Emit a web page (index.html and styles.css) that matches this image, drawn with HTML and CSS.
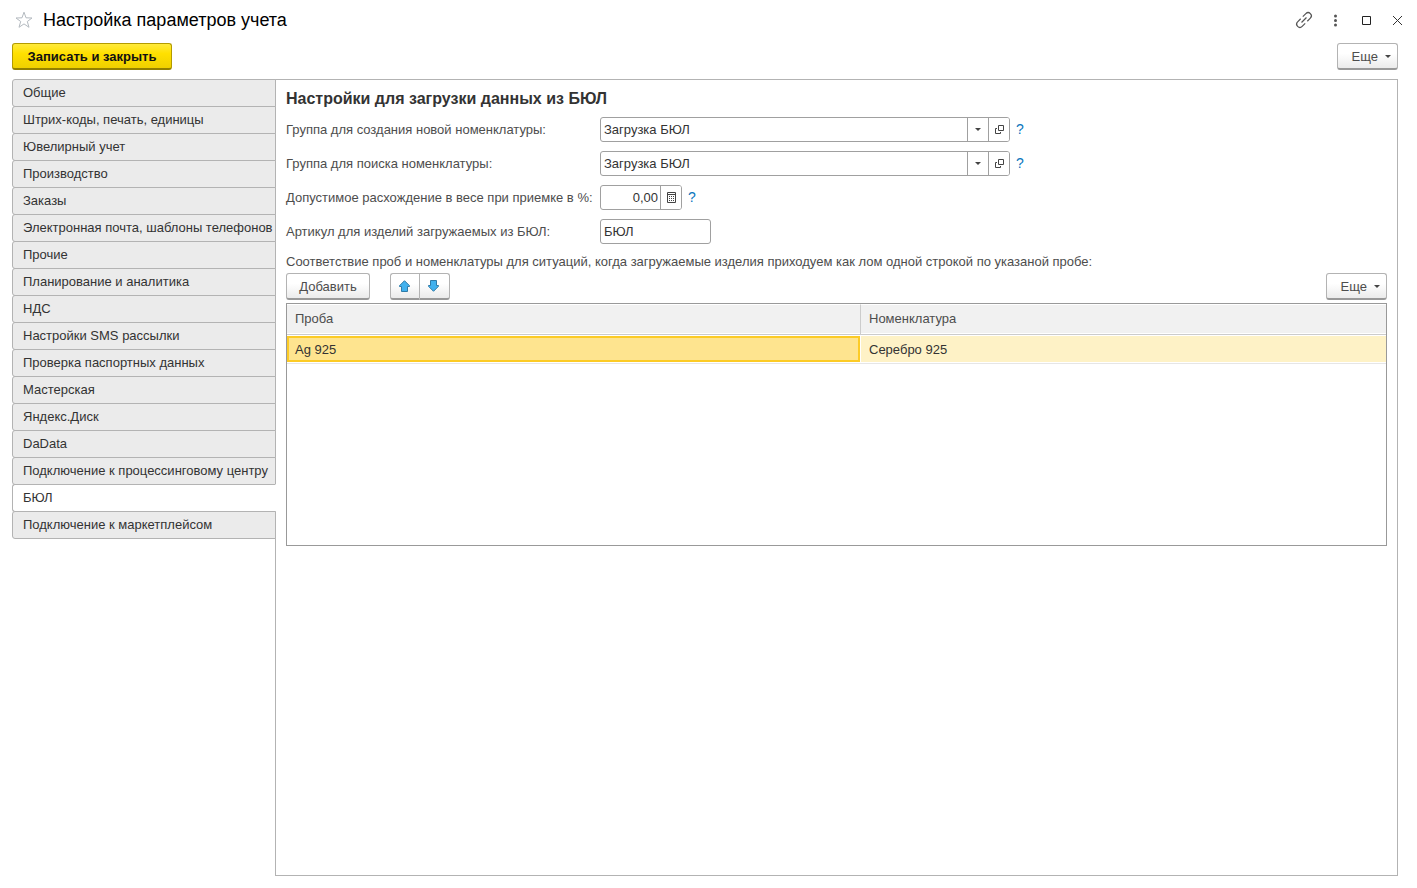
FILE: index.html
```html
<!DOCTYPE html>
<html lang="ru">
<head>
<meta charset="utf-8">
<title>Настройка параметров учета</title>
<link rel="stylesheet" href="styles.css">
</head>
<body>
<header class="titlebar">
  <button class="icon-btn star" aria-label="В избранное">
    <svg width="18" height="18" viewBox="0 0 18 18" fill="none" stroke="#b4bac0"><path d="M9 1.2 11 6.8 17 7 12.3 10.5 14 16.3 9 12.9 4 16.3 5.7 10.5 1 7 7 6.8Z"/></svg>
  </button>
  <h1 class="title">Настройка параметров учета</h1>
  <div class="window-tools">
    <button class="icon-btn" aria-label="Получить ссылку">
      <svg width="16" height="16" viewBox="0 0 16 16" fill="none" stroke="#555" stroke-width="1.2"><path transform="rotate(-45 8 8)" d="M6.500 4.800H2.200a3.200 3.200 0 0 0 0 6.400H6.500M9.500 4.800H13.800a3.200 3.200 0 0 1 0 6.400H9.500M4.500 8h7"/></svg>
    </button>
    <button class="icon-btn" aria-label="Меню">
      <svg width="16" height="16" viewBox="0 0 16 16" fill="#555"><circle cx="8.500" cy="4" r="1.500"/><circle cx="8.500" cy="8.500" r="1.500"/><circle cx="8.500" cy="13" r="1.500"/></svg>
    </button>
    <button class="icon-btn" aria-label="Развернуть">
      <svg width="16" height="16" viewBox="0 0 16 16" fill="none" stroke="#222"><path d="M4.500 4.500h8v8h-8z"/></svg>
    </button>
    <button class="icon-btn" aria-label="Закрыть">
      <svg width="16" height="16" viewBox="0 0 16 16" fill="none" stroke="#333"><path d="m4 4 9 9m0-9-9 9"/></svg>
    </button>
  </div>
</header>

<div class="commands">
  <button class="btn btn-primary">Записать и закрыть</button>
  <button class="btn btn-more">Еще <span class="caret"></span></button>
</div>

<main class="workspace">
  <nav class="tabs" role="tablist" aria-label="Разделы">
    <button class="tab" role="tab">Общие</button>
    <button class="tab" role="tab">Штрих-коды, печать, единицы</button>
    <button class="tab" role="tab">Ювелирный учет</button>
    <button class="tab" role="tab">Производство</button>
    <button class="tab" role="tab">Заказы</button>
    <button class="tab" role="tab">Электронная почта, шаблоны телефонов</button>
    <button class="tab" role="tab">Прочие</button>
    <button class="tab" role="tab">Планирование и аналитика</button>
    <button class="tab" role="tab">НДС</button>
    <button class="tab" role="tab">Настройки SMS рассылки</button>
    <button class="tab" role="tab">Проверка паспортных данных</button>
    <button class="tab" role="tab">Мастерская</button>
    <button class="tab" role="tab">Яндекс.Диск</button>
    <button class="tab" role="tab">DaData</button>
    <button class="tab" role="tab">Подключение к процессинговому центру</button>
    <button class="tab tab-active" role="tab" aria-selected="true">БЮЛ</button>
    <button class="tab" role="tab">Подключение к маркетплейсом</button>
  </nav>

  <section class="panel" role="tabpanel">
    <h2 class="panel-title">Настройки для загрузки данных из БЮЛ</h2>
    <form class="form">
      <label for="group-new">Группа для создания новой номенклатуры:</label>
      <div class="control">
        <div class="field field-wide">
          <input id="group-new" type="text" value="Загрузка БЮЛ">
          <button type="button" class="field-btn" aria-label="Выбрать"><span class="caret"></span></button>
          <button type="button" class="field-btn" aria-label="Открыть"><svg width="9" height="9" viewBox="0 0 9 9" fill="none" stroke="#444"><path d="M3.500.5h5v5h-5zM2 3.500H.5v5h5V7"/></svg></button>
        </div>
        <button type="button" class="help" aria-label="Справка">?</button>
      </div>

      <label for="group-find">Группа для поиска номенклатуры:</label>
      <div class="control">
        <div class="field field-wide">
          <input id="group-find" type="text" value="Загрузка БЮЛ">
          <button type="button" class="field-btn" aria-label="Выбрать"><span class="caret"></span></button>
          <button type="button" class="field-btn" aria-label="Открыть"><svg width="9" height="9" viewBox="0 0 9 9" fill="none" stroke="#444"><path d="M3.500.5h5v5h-5zM2 3.500H.5v5h5V7"/></svg></button>
        </div>
        <button type="button" class="help" aria-label="Справка">?</button>
      </div>

      <label for="deviation">Допустимое расхождение в весе при приемке в %:</label>
      <div class="control">
        <div class="field field-number">
          <input id="deviation" type="text" value="0,00">
          <button type="button" class="field-btn" aria-label="Калькулятор"><svg width="9" height="11" viewBox="0 0 9 11" fill="none" stroke="#444"><path d="M.5.5h8v10h-8zM1 2.500h7"/><path d="M2 4.500h5M2 6.500h5M2 8.500h5" stroke-dasharray="1 1"/></svg></button>
        </div>
        <button type="button" class="help" aria-label="Справка">?</button>
      </div>

      <label for="article">Артикул для изделий загружаемых из БЮЛ:</label>
      <div class="control">
        <div class="field field-short"><input id="article" type="text" value="БЮЛ"></div>
      </div>
    </form>

    <p class="note">Соответствие проб и номенклатуры для ситуаций, когда загружаемые изделия приходуем как лом одной строкой по указаной пробе:</p>

    <div class="toolbar">
      <button class="btn btn-add">Добавить</button>
      <div class="btn-group">
        <button class="btn btn-arrow" aria-label="Переместить вверх"><svg width="12" height="13" viewBox="0 0 12 13" fill="#41b1ee" stroke="#2f7ba8"><path d="M5.500.7 10.500 5.700V6.500H8.500V11.500H2.500V6.500H.5V5.700Z"/></svg></button>
        <button class="btn btn-arrow" aria-label="Переместить вниз"><svg width="12" height="13" viewBox="0 0 12 13" fill="#41b1ee" stroke="#2f7ba8"><path d="M5.500 11.300 10.500 6.300V5.500H8.500V.5H2.500V5.500H.5V6.300Z"/></svg></button>
      </div>
      <button class="btn btn-more">Еще <span class="caret"></span></button>
    </div>

    <div class="grid-box">
      <table class="grid">
        <colgroup><col class="col-probe"><col></colgroup>
        <thead><tr><th>Проба</th><th>Номенклатура</th></tr></thead>
        <tbody><tr><td class="current">Ag 925</td><td>Серебро 925</td></tr></tbody>
      </table>
    </div>
  </section>
</main>
</body>
</html>
```

FILE: styles.css
```css
* { box-sizing: border-box; }

body {
  margin: 0;
  min-height: 100vh;
  padding: 0 12px 12px;
  display: flex;
  flex-direction: column;
  background: #fff;
  color: #333;
  font: 13px/16px "Liberation Sans", Arial, sans-serif;
}

button, input {
  font: inherit;
  color: inherit;
  margin: 0;
}

svg {
  display: block;
  overflow: visible;
}

/* Window header */
.titlebar {
  display: flex;
  align-items: center;
  height: 43px;
  padding: 0 0 3px 3px;
}

.icon-btn {
  padding: 0;
  border: 0;
  background: none;
}

.title {
  margin: 0 0 0 10px;
  color: #000;
  font-size: 18px;
  line-height: 24px;
  font-weight: 400;
}

.window-tools {
  display: flex;
  gap: 15px;
  margin-left: auto;
}

/* Buttons */
.commands {
  display: flex;
  justify-content: space-between;
  margin-bottom: 9px;
  padding-right: 7px;
}

.btn {
  height: 27px;
  padding: 1px 13px 0;
  border: 1px solid #b3b3b3;
  border-bottom: 2px solid #999;
  border-radius: 3px;
  background: linear-gradient(#fff 40%, #ebebeb);
  color: #4d4d4d;
}

.btn-primary {
  border-color: #b39b00;
  border-bottom-color: #938000;
  background: linear-gradient(#ffea3b, #ffe000 40%, #efd000);
  color: #111;
  font-weight: 700;
  width: 160px;
  padding: 1px 0 0;
}

.btn-more {
  display: flex;
  align-items: center;
  justify-content: flex-end;
  gap: 7px;
  width: 61px;
  padding: 1px 6px 0;
}

.caret {
  border: 3px solid transparent;
  border-top-color: #444;
  border-bottom: 0;
}

/* Section tabs and page */
.workspace {
  display: flex;
  flex: 1;
  padding-right: 7px;
}

.tabs {
  z-index: 1;
  display: flex;
  flex-direction: column;
  align-self: flex-start;
  flex: 0 0 264px;
  margin-right: -1px;
}

.tab {
  height: 28px;
  margin-bottom: -1px;
  padding: 0 0 1px 10px;
  border: 1px solid #b3b3b3;
  border-radius: 3px 0 0 3px;
  background: #ebebeb;
  text-align: left;
  white-space: nowrap;
}

.tab:last-child { margin-bottom: 0; }

.tab-active {
  border-right-color: #fff;
  background: #fff;
}

.panel {
  flex: 1;
  min-width: 0;
  padding: 9px 10px;
  border: 1px solid #b3b3b3;
}

.panel-title {
  margin: 0 0 8px;
  font-size: 16px;
  line-height: 20px;
}

/* Form */
.form {
  display: grid;
  grid-template-columns: 304px 1fr;
  gap: 9px 10px;
  align-items: center;
  color: #4d4d4d;
}

.form label { white-space: nowrap; }

.control {
  display: flex;
  align-items: center;
  gap: 5px;
}

.field {
  display: flex;
  height: 25px;
  border: 1px solid #a0a0a0;
  border-radius: 3px;
  overflow: hidden;
  color: #333;
}

.field-wide { width: 410px; }
.field-number { width: 82px; }
.field-short { width: 111px; }

.field input {
  flex: 1;
  min-width: 0;
  padding: 0 3px;
  border: 0;
  outline: 0;
  background: none;
}

.field-number input {
  padding: 0 2px;
  text-align: right;
}

.field-btn {
  display: flex;
  align-items: center;
  justify-content: center;
  flex: 0 0 21px;
  padding: 0;
  border: 0;
  border-left: 1px solid #a0a0a0;
  background: #fff;
}

.help {
  padding: 0 1px 2px;
  border: 0;
  background: none;
  color: #0b76bd;
  font-size: 14px;
  line-height: 16px;
}

.note {
  margin: 10px 0 3px;
  color: #4d4d4d;
}

/* List */
.toolbar {
  display: flex;
  margin-bottom: 3px;
}

.toolbar .btn-more { margin-left: auto; }

.btn-add {
  width: 84px;
  padding: 1px 0 0;
}

.btn-group {
  display: flex;
  margin-left: 20px;
}

.btn-arrow {
  display: flex;
  align-items: center;
  justify-content: center;
  width: 30px;
  padding: 0;
}

.btn-arrow:first-child {
  width: 29px;
  border-radius: 3px 0 0 3px;
  border-right: 0;
}

.btn-arrow:last-child {
  width: 31px;
  padding-right: 1px;
  border-radius: 0 3px 3px 0;
}

.grid-box {
  height: 243px;
  border: 1px solid #999;
}

.grid {
  width: 100%;
  table-layout: fixed;
  border-collapse: separate;
  border-spacing: 0;
}

.col-probe { width: 574px; }

.grid th,
.grid td {
  padding: 0 8px;
  text-align: left;
  font-weight: 400;
}

.grid th {
  height: 31px;
  padding-bottom: 1px;
  border-top: 1px solid #fff;
  border-bottom: 1px solid #ccc;
  background: #f1f1f1;
  box-shadow: inset 0 -1px #fff;
  color: #4d4d4d;
}

.grid th:first-child { border-right: 1px solid #ccc; }

.grid td {
  height: 28px;
  padding-top: 1px;
  border: solid #fff;
  border-width: 1px 0;
  background: #fef2c6;
  box-shadow: 0 1px #e6e6e6;
}

.grid .current {
  border-right-width: 1px;
  background: #fee48f;
  box-shadow: inset 0 0 0 2px #fccb26, 0 1px #e6e6e6;
}
```
